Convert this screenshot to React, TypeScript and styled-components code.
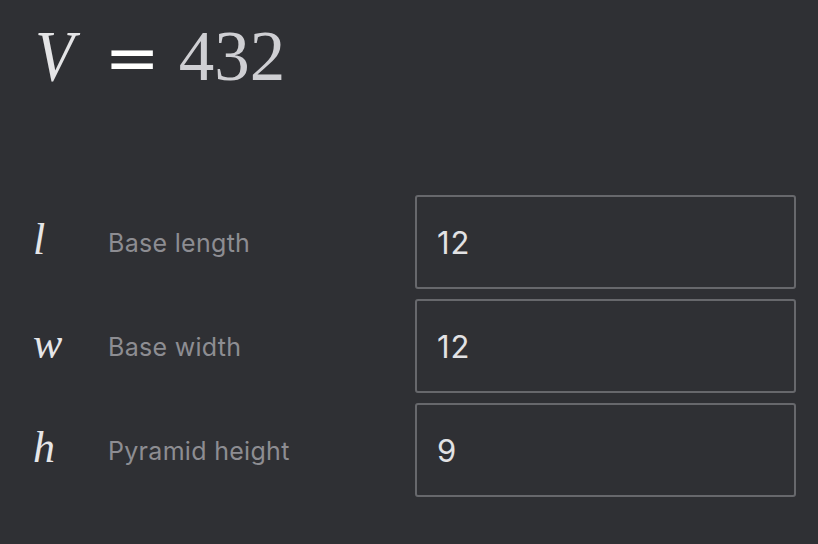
import * as React from "react";
import styled, { createGlobalStyle } from "styled-components";

const GlobalStyle = createGlobalStyle`
  html, body {
    margin: 0;
    padding: 0;
    background: #2f3034;
  }
  body {
    font-family: Inter, "Liberation Sans", sans-serif;
  }
`;

interface IField {
  symbol: string;
  label: string;
  value: string;
}

const fields: IField[] = [
  { symbol: "l", label: "Base length", value: "12" },
  { symbol: "w", label: "Base width", value: "12" },
  { symbol: "h", label: "Pyramid height", value: "9" },
];

function App() {
  const [values, setValues] = React.useState(fields.map((f) => f.value));
  const [l, w, h] = values.map((v) => parseFloat(v) || 0);
  const volume = Math.round(((l * w * h) / 3) * 1000) / 1000;

  return (
    <Page>
      <GlobalStyle />
      <Formula>
        <Variable>V</Variable>
        <Equals>=</Equals>
        <Result>{volume}</Result>
      </Formula>
      <FieldList>
        {fields.map((field, i) => (
          <Row key={field.symbol}>
            <Symbol>{field.symbol}</Symbol>
            <Label>{field.label}</Label>
            <Input
              value={values[i]}
              onChange={(e) => {
                const next = [...values];
                next[i] = e.target.value;
                setValues(next);
              }}
            />
          </Row>
        ))}
      </FieldList>
    </Page>
  );
}

const Page = styled.div`
  width: 818px;
  height: 544px;
  box-sizing: border-box;
  padding: 16px 22px 0 33px;
  background: #2f3034;
`;

const Formula = styled.div`
  display: flex;
  align-items: baseline;
  height: 84px;
  font-family: "Liberation Serif", "DejaVu Serif", serif;
  font-size: 71px;
  color: #d4d4d8;
`;

const Variable = styled.span`
  display: inline-block;
  font-style: italic;
  color: #e4e4e6;
  margin-left: 2px;
  transform: scaleX(0.9);
  transform-origin: left;
`;

const Equals = styled.span`
  font-family: "DejaVu Sans", sans-serif;
  font-size: 66px;
  color: #ffffff;
  margin: 0 19px 0 26px;
`;

const Result = styled.span`
  color: #cfcfd3;
`;

const FieldList = styled.div`
  display: flex;
  flex-direction: column;
  gap: 10px;
  margin-top: 95px;
`;

const Row = styled.div`
  display: grid;
  grid-template-columns: 75px 1fr 381px;
  align-items: center;
  height: 94px;
`;

const Symbol = styled.span`
  font-family: "Liberation Serif", "DejaVu Serif", serif;
  font-style: italic;
  font-size: 44px;
  color: #e6e6e8;
  padding-bottom: 6px;
`;

const Label = styled.span`
  font-size: 25px;
  letter-spacing: 0.3px;
  color: #8d8d92;
  padding-top: 2px;
`;

const Input = styled.input`
  box-sizing: border-box;
  width: 100%;
  height: 94px;
  padding: 0 20px;
  background: #2f3034;
  border: 2px solid #67686c;
  border-radius: 3px;
  font-family: Inter, "Liberation Sans", sans-serif;
  font-size: 31px;
  letter-spacing: 1px;
  color: #e2e2e4;
  outline: none;
`;

export default App;
